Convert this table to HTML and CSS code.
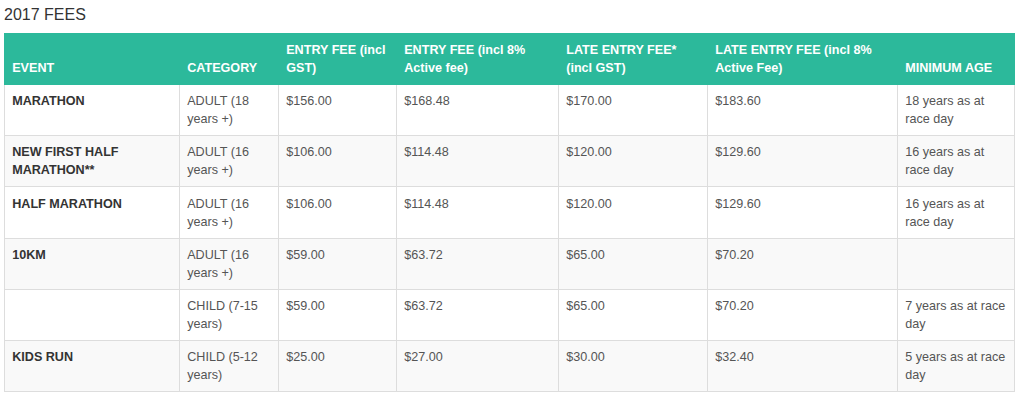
FILE: index.html
```html
<!DOCTYPE html>
<html lang="en">
<head>
<meta charset="utf-8">
<title>2017 Fees</title>
<link rel="stylesheet" href="styles.css">
</head>
<body>
<div class="page">
  <h3 class="title">2017 FEES</h3>
  <table class="fees">
    <colgroup>
      <col class="c1"><col class="c2"><col class="c3"><col class="c4"><col class="c5"><col class="c6"><col class="c7">
    </colgroup>
    <thead>
      <tr>
        <th>EVENT</th>
        <th>CATEGORY</th>
        <th>ENTRY FEE (incl GST)</th>
        <th>ENTRY FEE (incl 8% Active fee)</th>
        <th>LATE ENTRY FEE* (incl GST)</th>
        <th>LATE ENTRY FEE (incl 8% Active Fee)</th>
        <th>MINIMUM AGE</th>
      </tr>
    </thead>
    <tbody>
      <tr>
        <td class="ev">MARATHON</td><td>ADULT (18 years +)</td><td>$156.00</td><td>$168.48</td><td>$170.00</td><td>$183.60</td><td>18 years as at race day</td>
      </tr>
      <tr>
        <td class="ev">NEW FIRST HALF MARATHON**</td><td>ADULT (16 years +)</td><td>$106.00</td><td>$114.48</td><td>$120.00</td><td>$129.60</td><td>16 years as at race day</td>
      </tr>
      <tr>
        <td class="ev">HALF MARATHON</td><td>ADULT (16 years +)</td><td>$106.00</td><td>$114.48</td><td>$120.00</td><td>$129.60</td><td>16 years as at race day</td>
      </tr>
      <tr>
        <td class="ev">10KM</td><td>ADULT (16 years +)</td><td>$59.00</td><td>$63.72</td><td>$65.00</td><td>$70.20</td><td></td>
      </tr>
      <tr>
        <td class="ev"></td><td>CHILD (7-15 years)</td><td>$59.00</td><td>$63.72</td><td>$65.00</td><td>$70.20</td><td>7 years as at race day</td>
      </tr>
      <tr>
        <td class="ev">KIDS RUN</td><td>CHILD (5-12 years)</td><td>$25.00</td><td>$27.00</td><td>$30.00</td><td>$32.40</td><td>5 years as at race day</td>
      </tr>
    </tbody>
  </table>
</div>
</body>
</html>
```
FILE: styles.css
```css
html, body {
  margin: 0;
  padding: 0;
  background: #fff;
}
body {
  font-family: "Liberation Sans", Arial, Helvetica, sans-serif;
  color: #555;
}
.page {
  padding: 6px 4px 0 4px;
}
.title {
  margin: 0 0 9px 0;
  font-size: 16px;
  font-weight: normal;
  line-height: 18px;
  color: #333;
}
.fees {
  width: 1010px;
  table-layout: fixed;
  border-collapse: collapse;
  font-size: 12.6px;
  line-height: 18px;
  border: 1px solid #ddd;
}
.c1 { width: 175px; }
.c2 { width: 99px; }
.c3 { width: 118px; }
.c4 { width: 162px; }
.c5 { width: 149px; }
.c6 { width: 190px; }
.c7 { width: 117px; }
.fees th {
  background: #2cb99b;
  color: #fff;
  font-weight: bold;
  text-align: left;
  vertical-align: bottom;
  padding: 7px 7.2px 7px 7.2px;
  border: 1px solid #2cb99b;
}
.fees td {
  vertical-align: top;
  padding: 7.2px 7.2px 7px 7.2px;
  border: 1px solid #ddd;
  color: #555;
}
.fees td.ev {
  font-weight: bold;
  color: #333;
}
.fees tbody tr:nth-child(even) td {
  background: #f9f9f9;
}
```
